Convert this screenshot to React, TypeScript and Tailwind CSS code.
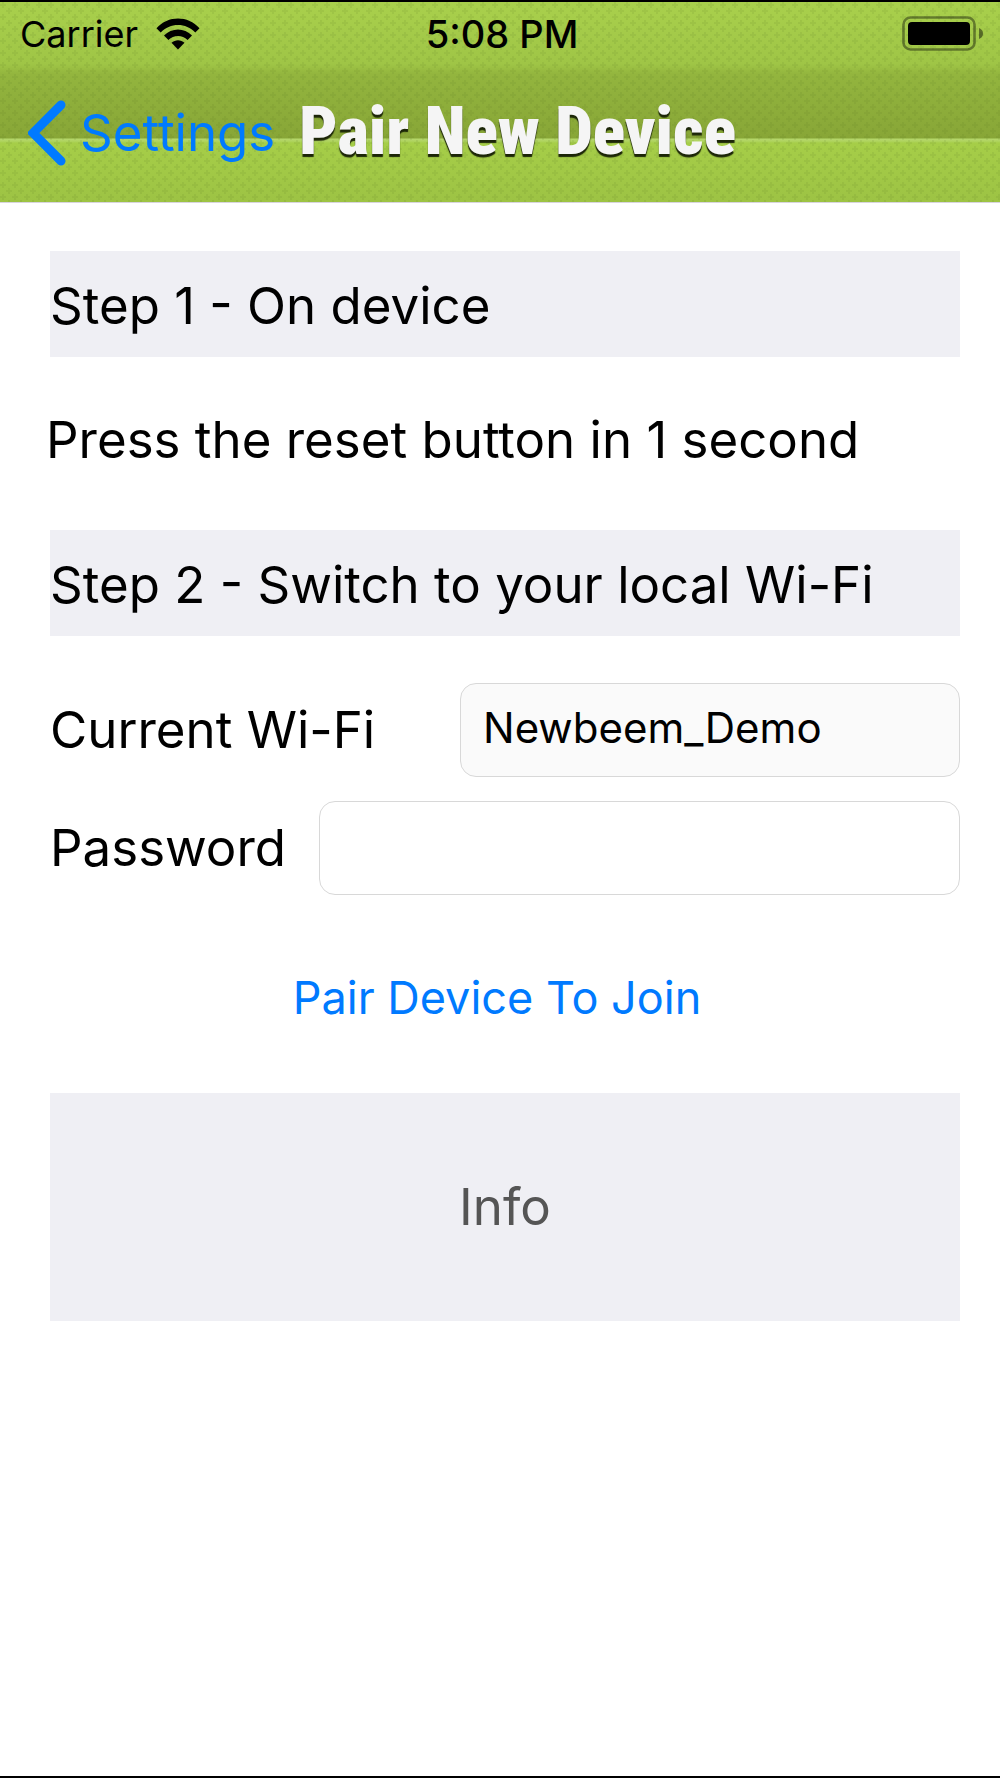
import { FormEvent, useState } from "react";

function WifiIcon() {
  return (
    <svg viewBox="0 0 44 32" className="h-8 w-11" aria-hidden="true">
      <path d="M0.5 10.2C12 -2.8 32 -2.8 43.5 10.2L39.3 14.4C30 4.4 14 4.4 4.7 14.4Z" />
      <path d="M8 17.6C15.6 9.3 28.4 9.3 36 17.6L31.6 22C26.2 16.6 17.8 16.6 12.4 22Z" />
      <path d="M15.5 24.8C19.2 21.4 24.8 21.4 28.5 24.8L22 31.5Z" />
    </svg>
  );
}

function BatteryIcon() {
  return (
    <svg viewBox="0 0 82 36" className="h-9 w-[82px]" aria-hidden="true">
      <rect x="1.5" y="1.5" width="71" height="32" rx="7" fill="none" stroke="#000" strokeOpacity="0.4" strokeWidth="2.6" />
      <rect x="6" y="6" width="62" height="23" rx="4" />
      <path d="M77 12C82.4 14 82.4 21 77 23Z" fillOpacity="0.45" />
    </svg>
  );
}

function HeaderTexture() {
  return (
    <svg className="absolute inset-0 -z-10 size-full" aria-hidden="true">
      <defs>
        <pattern id="weave" width="12" height="12" patternUnits="userSpaceOnUse">
          <path d="M0 3h6M3 0v6M6 9h6M9 6v6" stroke="#4d6f1a" strokeOpacity="0.1" strokeWidth="2" />
        </pattern>
      </defs>
      <rect width="100%" height="100%" fill="url(#weave)" />
    </svg>
  );
}

export default function App() {
  const [network, setNetwork] = useState("Newbeem_Demo");
  const [password, setPassword] = useState("");

  function handleSubmit(e: FormEvent) {
    e.preventDefault();
  }

  return (
    <div className="flex min-h-screen flex-col border-y-2 border-black bg-white font-['Inter',sans-serif] text-[51px] leading-[62px] text-black">
      <header className="relative isolate border-b border-[#d8d4de] bg-[linear-gradient(to_bottom,#a9d04c_0px,#9fc546_62px,#93b53e_72px,#88a637_136px,#b5d76c_137px,#b0d461_139px,#a6ce48_141px,#9dc344_199px)]">
        <HeaderTexture />
        <div className="grid grid-cols-3 items-center pt-3 pr-4 pl-5 text-[36px] leading-10">
          <div className="flex items-center gap-[18px]">
            <span>Carrier</span>
            <WifiIcon />
          </div>
          <span className="text-center text-[38px] font-medium">5:08 PM</span>
          <span className="justify-self-end">
            <BatteryIcon />
          </span>
        </div>
        <nav className="flex items-center px-7 pt-[46px] pb-9">
          <a href="#settings" className="flex items-center gap-3 text-[#007aff]">
            <svg viewBox="0 0 40 66" className="h-[66px] w-10" fill="none" aria-hidden="true">
              <path d="M33 5L5 33L33 61" stroke="currentColor" strokeWidth="9" strokeLinecap="round" />
            </svg>
            Settings
          </a>
          <h1 className="ml-6 pb-1 font-['Roboto_Condensed','Roboto',sans-serif] text-[67px] leading-[58px] font-black text-[#f5f5f5] [text-shadow:0_3px_1px_#1c2608]">
            Pair New Device
          </h1>
        </nav>
      </header>

      <main className="pt-12 pr-10 pl-[50px]">
        <h2 className="bg-[#efeff4] pt-6 pb-5">Step 1 - On device</h2>
        <p className="-ml-1 pt-[52px] pb-[59px]">Press the reset button in 1 second</p>
        <h2 className="bg-[#efeff4] pt-6 pb-5">Step 2 - Switch to your local Wi-Fi</h2>

        <form onSubmit={handleSubmit} className="flex flex-col gap-6 pt-[47px]">
          <div className="flex items-center">
            <label htmlFor="network" className="w-[410px] shrink-0">
              Current Wi-Fi
            </label>
            <input
              id="network"
              value={network}
              onChange={(e) => setNetwork(e.target.value)}
              className="h-[94px] min-w-0 flex-1 rounded-2xl border border-[#d8d8d8] bg-[#fafafa] px-[22px] pb-1.5 text-[42px]"
            />
          </div>
          <div className="flex items-center">
            <label htmlFor="password" className="w-[269px] shrink-0">
              Password
            </label>
            <input
              id="password"
              type="password"
              value={password}
              onChange={(e) => setPassword(e.target.value)}
              className="h-[94px] min-w-0 flex-1 rounded-2xl border border-[#d8d8d8] bg-white px-[22px] pb-1.5 text-[42px]"
            />
          </div>
          <button type="submit" className="mt-12 self-center pr-4 text-[45px] text-[#007aff]">
            Pair Device To Join
          </button>
        </form>

        <p className="mt-16 bg-[#efeff4] py-[83px] text-center text-[#555555]">Info</p>
      </main>
    </div>
  );
}
